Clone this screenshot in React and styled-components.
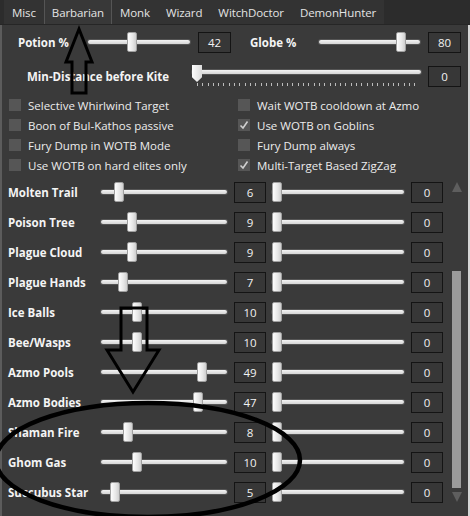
import React from "react";
import styled, { createGlobalStyle } from "styled-components";

const GlobalStyle = createGlobalStyle`
  body {
    margin: 0;
    background: #3a3a3a;
    font-family: "Open Sans", "Noto Sans", sans-serif;
  }
`;

const Window = styled.div`
  position: relative;
  width: 470px;
  height: 516px;
  background: #3a3a3a;
  box-shadow: inset 2px 0 0 #5c5c5c, inset -2px 0 0 #d6d6d6;
  overflow: hidden;
  color: #f2f2f2;
  font-size: 11.5px;
`;

const TabBar = styled.div`
  display: flex;
  height: 24px;
  padding-left: 4px;
  background: #2c2c2c;
  border-bottom: 1px solid #262626;
`;

const Tab = styled.div`
  display: flex;
  align-items: center;
  padding: 0 8px;
  color: #e4e4e4;
  font-size: 11.5px;
  letter-spacing: -0.1px;
  background: ${(p) => (p.$active ? "#383838" : "#333333")};
  box-shadow: ${(p) => (p.$active ? "inset 1px 0 0 #555, inset -1px 0 0 #555" : "none")};
`;

const TopRow = styled.div`
  display: flex;
  align-items: center;
  height: 24px;
  margin-top: 5px;
  padding-left: 18px;
`;

const KiteRow = styled.div`
  display: flex;
  align-items: center;
  height: 24px;
  margin-top: 10px;
  padding-left: 27px;
`;

const Label = styled.div`
  width: ${(p) => p.$w}px;
  flex: none;
  font-weight: 700;
  color: #f4f4f4;
  white-space: nowrap;
`;

const Gap = styled.div`
  width: ${(p) => p.$w}px;
  flex: none;
`;

const ValueBox = styled.div`
  width: ${(p) => p.$w || 32}px;
  height: 21px;
  flex: none;
  margin-left: ${(p) => p.$ml || 0}px;
  box-sizing: border-box;
  border: 1px solid #141414;
  background: #373737;
  color: #f2f2f2;
  display: flex;
  align-items: center;
  justify-content: center;
  font-size: 11.5px;
`;

const SliderBox = styled.div`
  position: relative;
  width: ${(p) => p.$w}px;
  height: 22px;
  flex: none;
`;

const TrackLine = styled.div`
  position: absolute;
  left: 0;
  right: 0;
  top: 9px;
  height: 4px;
  border-radius: 2px;
  background: linear-gradient(#f4f4f4, #d4d4d4);
  box-shadow: 0 0 0 1px #8a8a8a55;
`;

const Thumb = styled.div`
  position: absolute;
  top: 1px;
  width: 10px;
  height: 20px;
  box-sizing: border-box;
  border: 1px solid #a0a0a0;
  border-radius: 2px;
  background: linear-gradient(90deg, #fdfdfd, #e6e6e6 60%, #cfcfcf);
`;

const KiteSlider = styled.div`
  position: relative;
  width: 229px;
  height: 24px;
  flex: none;
`;

const KiteTrack = styled(TrackLine)`
  top: 6px;
`;

const KiteThumb = styled.div`
  position: absolute;
  left: 0;
  top: 1px;
  width: 10px;
  height: 17px;
  background: linear-gradient(90deg, #fdfdfd, #dcdcdc);
  clip-path: polygon(0 0, 100% 0, 100% 72%, 50% 100%, 0 72%);
`;

const Ticks = styled.div`
  position: absolute;
  left: 5px;
  right: 2px;
  top: 19px;
  height: 3px;
  background: repeating-linear-gradient(90deg, #bdbdbd 0 1px, transparent 1px 5.3px);
`;

const CheckGrid = styled.div`
  display: grid;
  grid-template-columns: 229px 1fr;
  grid-auto-rows: 20px;
  margin-top: 7px;
  padding-left: 9px;
`;

const CheckItem = styled.div`
  display: flex;
  align-items: center;
  gap: 7px;
  color: #ececec;
  white-space: nowrap;
`;

const Box = styled.div`
  width: 12px;
  height: 12px;
  flex: none;
  background: #565656;
  display: flex;
  align-items: center;
  justify-content: center;
`;

const ListArea = styled.div`
  display: flex;
  margin-top: 2px;
`;

const Rows = styled.div`
  display: flex;
  flex-direction: column;
  width: 443px;
`;

const Row = styled.div`
  display: flex;
  align-items: center;
  height: 30px;
  padding-left: 8px;
`;

const Scrollbar = styled.div`
  display: flex;
  flex-direction: column;
  align-items: center;
  width: 9px;
  margin-left: 9px;
  margin-top: 5px;
`;

const Arrow = styled.div`
  width: 0;
  height: 0;
  border-left: 5px solid transparent;
  border-right: 5px solid transparent;
  ${(p) =>
    p.$down
      ? "border-top: 10px solid #5e5e5e;"
      : "border-bottom: 10px solid #5e5e5e;"}
`;

const ScrollThumb = styled.div`
  width: 9px;
  height: 217px;
  margin: 79px 0 4px;
  background: #9b9b9b;
`;

const Overlay = styled.svg`
  position: absolute;
  left: 0;
  top: 0;
  pointer-events: none;
`;

const tabs = ["Misc", "Barbarian", "Monk", "Wizard", "WitchDoctor", "DemonHunter"];

const checks = [
  ["Selective Whirlwind Target", false],
  ["Wait WOTB cooldown at Azmo", false],
  ["Boon of Bul-Kathos passive", false],
  ["Use WOTB on Goblins", true],
  ["Fury Dump in WOTB Mode", false],
  ["Fury Dump always", false],
  ["Use WOTB on hard elites only", false],
  ["Multi-Target Based ZigZag", true],
];

// [label, value, thumb center x on the page]
const rows = [
  ["Molten Trail", 6, 119],
  ["Poison Tree", 9, 132],
  ["Plague Cloud", 9, 132],
  ["Plague Hands", 7, 123],
  ["Ice Balls", 10, 137],
  ["Bee/Wasps", 10, 137],
  ["Azmo Pools", 49, 202],
  ["Azmo Bodies", 47, 198],
  ["Shaman Fire", 8, 128],
  ["Ghom Gas", 10, 137],
  ["Succubus Star", 5, 115],
];

function Slider({ width, left }) {
  return (
    <SliderBox $w={width}>
      <TrackLine />
      <Thumb style={{ left }} />
    </SliderBox>
  );
}

function Check({ on }) {
  return (
    <Box>
      {on && (
        <svg width="10" height="10" viewBox="0 0 10 10">
          <polyline points="1.5,5.5 4,8 8.5,1.5" fill="none" stroke="#d0d0d0" strokeWidth="1.6" />
        </svg>
      )}
    </Box>
  );
}

export default function App() {
  return (
    <Window>
      <GlobalStyle />
      <TabBar>
        {tabs.map((t) => (
          <Tab key={t} $active={t === "Barbarian"}>{t}</Tab>
        ))}
      </TabBar>

      <TopRow>
        <Label $w={70}>Potion %</Label>
        <Slider width={102} left={39} />
        <ValueBox $w={33} $ml={8}>42</ValueBox>
        <Gap $w={19} />
        <Label $w={69}>Globe %</Label>
        <Slider width={101} left={77} />
        <ValueBox $w={33} $ml={8}>80</ValueBox>
      </TopRow>

      <KiteRow>
        <Label $w={165}>Min-Distance before Kite</Label>
        <KiteSlider>
          <KiteTrack />
          <KiteThumb />
          <Ticks />
        </KiteSlider>
        <ValueBox $w={33} $ml={7}>0</ValueBox>
      </KiteRow>

      <CheckGrid>
        {checks.map(([text, on]) => (
          <CheckItem key={text}>
            <Check on={on} />
            {text}
          </CheckItem>
        ))}
      </CheckGrid>

      <ListArea>
        <Rows>
          {rows.map(([name, val, cx]) => (
            <Row key={name}>
              <Label $w={93}>{name}</Label>
              <Slider width={126} left={cx - 5 - 101} />
              <ValueBox $ml={7}>{val}</ValueBox>
              <Gap $w={6} />
              <Slider width={132} left={0} />
              <ValueBox $ml={7}>0</ValueBox>
            </Row>
          ))}
        </Rows>
        <Scrollbar>
          <Arrow />
          <ScrollThumb />
          <Arrow $down />
        </Scrollbar>
      </ListArea>

      <Overlay width="470" height="516" viewBox="0 0 470 516">
        <polygon
          points="79,29 92,62 86,62 86,93 72,93 72,62 66,62"
          fill="none"
          stroke="#000"
          strokeWidth="3"
        />
        <polygon
          points="121,308 147,308 147,350 159,350 133,392 107,350 121,350"
          fill="none"
          stroke="#000"
          strokeWidth="3"
        />
        <ellipse cx="148" cy="460" rx="152" ry="57" fill="none" stroke="#000" strokeWidth="4.5" />
      </Overlay>
    </Window>
  );
}
